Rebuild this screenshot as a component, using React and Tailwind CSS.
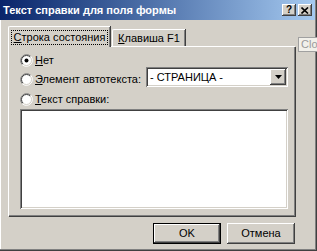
import React from 'react';

const raised = 'shadow-[inset_-1px_-1px_0_#404040,inset_1px_1px_0_#ffffff,inset_-2px_-2px_0_#808080]';
const sunken = 'shadow-[inset_1px_1px_0_#808080,inset_-1px_-1px_0_#ffffff,inset_2px_2px_0_#404040,inset_-2px_-2px_0_#d4d0c8]';

const Radio = ({ checked }) => (
  <svg width="13" height="13" viewBox="0 0 13 13" className="shrink-0">
    <circle cx="6.5" cy="6.5" r="5.5" fill="#ffffff" />
    <path d="M2.26 10.74 A6 6 0 0 1 10.74 2.26" fill="none" stroke="#808080" />
    <path d="M10.74 2.26 A6 6 0 0 1 2.26 10.74" fill="none" stroke="#ffffff" />
    <path d="M2.96 10.04 A5 5 0 0 1 10.04 2.96" fill="none" stroke="#404040" />
    <path d="M10.04 2.96 A5 5 0 0 1 2.96 10.04" fill="none" stroke="#d4d0c8" />
    {checked && <circle cx="6.5" cy="6.5" r="2" fill="#000000" />}
  </svg>
);

const CaptionButton = ({ children }) => (
  <div className={`w-[14px] h-[12px] bg-[#d4d0c8] ${raised} flex items-center justify-center`}>
    {children}
  </div>
);

export default function App() {
  return (
    <div
      className="relative w-[317px] h-[251px] overflow-hidden bg-[#d4d0c8] text-black text-[11px] shadow-[inset_-1px_-1px_0_#404040,inset_-2px_-2px_0_#808080,inset_1px_0_0_#ffffff]"
      style={{ fontFamily: '"Liberation Sans", Arial, sans-serif' }}
    >
      {/* title bar */}
      <div className="h-[20px] mr-[2px] flex items-center justify-between bg-gradient-to-r from-[#0a246a] to-[#a6caf0] pl-[3px] pr-[3px]">
        <span className="text-white font-bold text-[11px] leading-none">Текст справки для поля формы</span>
        <div className="flex gap-[2px]">
          <CaptionButton>
            <span className="font-bold text-[10px] leading-none">?</span>
          </CaptionButton>
          <CaptionButton>
            <svg width="8" height="7" viewBox="0 0 8 7">
              <path d="M0.5 0.5 L7 6.5 M7 0.5 L0.5 6.5" stroke="#000" strokeWidth="1.6" />
            </svg>
          </CaptionButton>
        </div>
      </div>

      <div className="pl-[8px] pt-[6px]">
        {/* tabs */}
        <div className="flex items-end h-[20px] relative z-10">
          <div className="h-[21px] -mb-px w-[102px] bg-[#d4d0c8] border-l border-t border-white rounded-tl-[2px] shadow-[inset_-1px_0_0_#808080,1px_0_0_#404040] flex items-start justify-center pt-[3px]">
            <span className="border border-dotted border-black px-[2px] leading-[13px]">
              <u>С</u>трока состояния
            </span>
          </div>
          <div className="h-[17px] w-[73px] ml-[2px] border-l border-t border-white rounded-tl-[2px] shadow-[inset_-1px_0_0_#808080,1px_0_0_#404040] flex items-start justify-center pt-[2px]">
            <span className="leading-[13px]">
              <u>К</u>лавиша F1
            </span>
          </div>
        </div>

        {/* panel */}
        <div className="w-[287px] h-[170px] border-l border-t border-white shadow-[inset_-1px_-1px_0_#808080,1px_1px_0_#404040] pl-[11px] pr-[7px] pt-[7px]">
          <div className="flex items-center gap-[2px] h-[13px]">
            <Radio checked />
            <span><u>Н</u>ет</span>
          </div>
          <div className="flex items-start h-[20px] mt-0">
            <div className="flex items-center gap-[2px] h-[13px] mt-[6px]">
              <Radio />
              <span><u>Э</u>лемент автотекста:</span>
            </div>
            <div className={`ml-auto w-[142px] h-[20px] bg-white ${sunken} flex items-center pl-[4px] pr-[2px]`}>
              <span className="flex-1">- СТРАНИЦА -</span>
              <div className={`w-[16px] h-[16px] bg-[#d4d0c8] ${raised} flex items-center justify-center`}>
                <svg width="7" height="4" viewBox="0 0 7 4">
                  <path d="M0 0 H7 L3.5 4 Z" fill="#000" />
                </svg>
              </div>
            </div>
          </div>
          <div className="flex items-center gap-[2px] h-[13px] mt-[6px]">
            <Radio />
            <span><u>Т</u>екст справки:</span>
          </div>
          <div className={`mt-[3px] h-[100px] bg-white ${sunken}`} />
        </div>

        {/* buttons */}
        <div className="flex justify-end gap-[6px] w-[287px] mt-[7px]">
          <div className="w-[68px] h-[21px] border border-black">
            <div className={`w-full h-full ${raised} flex items-center justify-center`}>OK</div>
          </div>
          <div className={`w-[68px] h-[21px] ${raised} flex items-center justify-center`}>Отмена</div>
        </div>
      </div>

      {/* tooltip, clipped by the screen edge */}
      <div className="absolute left-[298px] top-[37px] w-[19px] h-[15px] pl-[2px] bg-[#f2f0ea] border-l border-t border-b border-[#a0a0a0] text-[#9a9a9a] leading-[13px] whitespace-nowrap">
        Clo
      </div>
    </div>
  );
}
